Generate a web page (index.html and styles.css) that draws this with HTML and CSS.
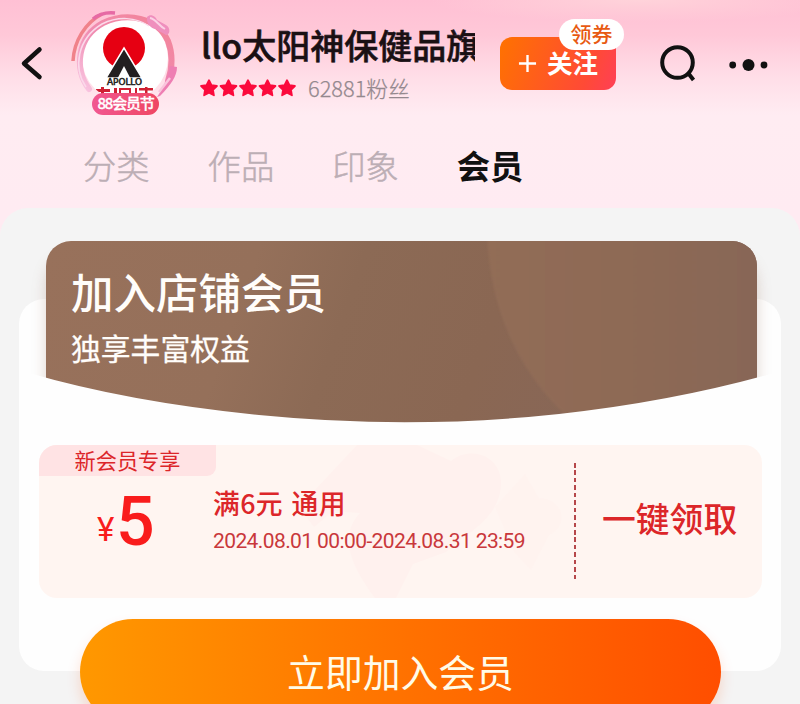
FILE: index.html
```html
<!DOCTYPE html>
<html lang="zh-CN">
<head>
<meta charset="utf-8">
<title>店铺会员</title>
<link rel="stylesheet" href="styles.css">
</head>
<body>
<div class="page">
  <header class="shop">
    <svg class="back" viewBox="0 0 24 36"><path d="M19.500 4.500 4 18.500l15.500 13.500"/></svg>
    <div class="avatar">
      <svg class="avatar-art" viewBox="0 0 112 110">
        <defs>
          <linearGradient id="ring" x1="0" y1="1" x2="1" y2="0">
            <stop offset="0" stop-color="#f9c6e2"/><stop offset=".45" stop-color="#f08db2"/><stop offset="1" stop-color="#f38295"/>
          </linearGradient>
          <clipPath id="disc"><circle cx="56" cy="50" r="43"/></clipPath>
        </defs>
        <circle cx="56" cy="50" r="43" fill="#fff"/>
        <g clip-path="url(#disc)">
          <circle cx="55" cy="40" r="21" fill="#e60012"/>
          <path d="M55 40 73 70H37z" fill="#231f20" stroke="#fff" stroke-width="1.500"/>
          <path d="M55 58l6.500 12.500h-13z" fill="#fff"/>
          <text x="38" y="77" textLength="35" lengthAdjust="spacingAndGlyphs" class="brand">APOLLO</text>
          <g fill="#cf2033"><path d="M27 81h14v3H27zM32 79h3v7h-3zM45 80h3v6h-3zM50 80h12v2H50zM50 80h2v6h-2zM60 80h2v6h-2zM66 80h2v6h-2zM70 80h14v2.500H70zM76 79h2.500v7H76z"/></g>
        </g>
        <path d="M20 81C5 61 8 29 34 15C58 4 88 9 99 33C104 46 104 58 99 73" fill="none" stroke="url(#ring)" stroke-width="6" stroke-linecap="round"/>
        <path d="M17 79C4 60 8 31 33 16C49 8 67 9 80 18" fill="none" stroke="#fbd9ea" stroke-width="1.500"/>
        <path d="M4 53C5 33 16 15 33 6" fill="none" stroke="#f0828a" stroke-width="3.500"/>
        <path d="M24 11C30 6 37 4 46 5" fill="none" stroke="#e66aa4" stroke-width="3.500"/>
        <path d="M78 9c4-4 9 0 10 3l9 5c5 3 4 10 0 10-4-3-7-3-10-6-5 0-10-6-9-12z" fill="#ef8fbd"/>
        <path d="M81 10c6 1 8 7 15 11" fill="none" stroke="#fbd1e5" stroke-width="2"/>
        <path d="M101 58l7 1c0 9-6 18-17 29l-3 1c5-7 9-15 13-31z" fill="#ee7fb3"/>
        <path d="M101 70 90 84" stroke="#fac5dc" stroke-width="2.500"/>
      </svg>
      <span class="fest">88会员节</span>
    </div>
    <div class="info">
      <div class="name">llo太阳神保健品旗</div>
      <div class="meta">
        <svg class="stars" viewBox="0 0 98 18">
          <defs><path id="s" d="M9 1.200l2.500 4.900 5.400.9-3.900 3.800.9 5.500L9 13.800l-4.900 2.500.9-5.500L1.100 7l5.400-.9z"/></defs>
          <use href="#s"/><use href="#s" x="19.500"/><use href="#s" x="39"/><use href="#s" x="58.500"/><use href="#s" x="78"/>
        </svg>
        <span class="fans">62881粉丝</span>
      </div>
    </div>
    <div class="follow">
      <svg class="plus" viewBox="0 0 20 20"><path d="M10 1v18M1 10h18"/></svg>
      <span class="label">关注</span>
      <span class="bubble">领券</span>
    </div>
    <svg class="search" viewBox="0 0 38 38"><circle cx="18.500" cy="17.500" r="15.300"/><path d="M29.500 28.500l5 6.500"/></svg>
    <svg class="more" viewBox="0 0 40 14"><circle cx="3.700" cy="7" r="3.400"/><circle cx="19.500" cy="7" r="6"/><circle cx="35" cy="7" r="3.400"/></svg>
  </header>

  <nav class="tabs">
    <span>分类</span><span>作品</span><span>印象</span><span class="on">会员</span>
  </nav>

  <main class="panel">
    <section class="member">
      <div class="hero">
        <svg class="hero-art" viewBox="0 0 762 204">
          <defs>
            <linearGradient id="brown" x1="0" y1="0" x2="1" y2=".1">
              <stop offset="0" stop-color="#98715b"/><stop offset=".3" stop-color="#95705a"/><stop offset=".45" stop-color="#8c6a55"/><stop offset=".66" stop-color="#8a6753"/><stop offset="1" stop-color="#86665a"/>
            </linearGradient>
            <linearGradient id="glow" x1="0" y1="0" x2="1" y2="0">
              <stop offset="0" stop-color="#926d57"/><stop offset=".45" stop-color="#8e6a55"/><stop offset="1" stop-color="#866557"/>
            </linearGradient>
            <clipPath id="card"><path d="M27 204V26A25 25 0 0 1 52 1H713a25 25 0 0 1 25 25V204z"/></clipPath>
            <filter id="blur" x="-10%" y="-20%" width="120%" height="140%"><feGaussianBlur stdDeviation="8"/></filter>
            <filter id="edge"><feGaussianBlur stdDeviation="1"/></filter>
          </defs>
          <rect x="29" y="18" width="707" height="160" rx="25" fill="#8c5f45" opacity=".34" filter="url(#blur)"/>
          <g clip-path="url(#card)">
            <rect x="27" y="1" width="711" height="203" fill="url(#brown)"/>
            <path d="M468 -10C470 70 500 135 556 184L780 200V-10z" fill="url(#glow)" filter="url(#edge)"/>
          </g>
          <path d="M0 130L10 133Q110 162 240 175Q391 190 540 174Q650 162 748 135L762 131V204H0z" fill="#fefefe"/>
        </svg>
        <div class="hero-text">
          <h1>加入店铺会员</h1>
          <p>独享丰富权益</p>
        </div>
      </div>

      <div class="coupon">
        <svg class="mark" viewBox="0 0 280 153"><g fill="#fff1ee"><path d="M0 62 58 0h60l34 16c20-16 50-5 50 22 0 35-36 51-55 69l-33 12-17 34H76c-22-30-38-60-15-85L34 66 15 82z"/><path d="M196 62 226 29l14 24c28 2 28 30 10 37l-18 35-16-17z" opacity=".6"/></g></svg>
        <span class="tag">新会员专享</span>
        <div class="row">
          <div class="price"><span class="yen">¥</span><span class="num">5</span></div>
          <div class="terms">
            <div class="rule">满6元 通用</div>
            <div class="date">2024.08.01 00:00-2024.08.31 23:59</div>
          </div>
          <div class="sep"></div>
          <div class="get">一键领取</div>
        </div>
      </div>
      <div class="join">立即加入会员</div>
    </section>
  </main>
</div>
</body>
</html>
```
FILE: styles.css
```css
* { box-sizing: border-box; }

body {
  margin: 0;
  font-family: "Noto Sans CJK SC", sans-serif;
  overflow: hidden;
}

.page {
  width: 800px;
  height: 704px;
  overflow: hidden;
  background:
    radial-gradient(ellipse 210px 22px at 640px 0, #ffd3da 0, #ffd3da00 100%),
    linear-gradient(#ffc0d4 0, #ffc8d8 35px, #ffdde7 75px, #ffecf2 115px, #ffebf2 210px);
}

.shop {
  display: flex;
  align-items: flex-start;
  height: 130px;
  padding-left: 20px;
}

.back {
  width: 24px;
  height: 36px;
  margin-top: 45px;
  fill: none;
  stroke: #111;
  stroke-width: 4.5;
  stroke-linecap: round;
  stroke-linejoin: round;
}

.avatar {
  position: relative;
  width: 112px;
  margin: 8px 0 0 25px;
}

.avatar-art {
  display: block;
  width: 112px;
  height: 110px;
}

.brand {
  font: 8.500px "DejaVu Sans", sans-serif;
  fill: #231f20;
  stroke: #231f20;
  stroke-width: .5;
}

.fest {
  position: absolute;
  left: 23px;
  top: 85px;
  width: 67px;
  height: 22px;
  border-radius: 11px;
  background: linear-gradient(90deg, #f15891, #ef4763);
  color: #fff;
  font-size: 15px;
  font-weight: 500;
  line-height: 20px;
  letter-spacing: -1.2px;
  text-align: center;
  -webkit-text-stroke: .3px #fff;
}

.info {
  width: 274px;
  margin: 20px 0 0 20px;
}

.name {
  height: 50px;
  overflow: hidden;
  white-space: nowrap;
  color: #1a1014;
  font-size: 34px;
  font-weight: 500;
  line-height: 49px;
  -webkit-text-stroke: .6px #1a1014;
}

.meta {
  display: flex;
  align-items: center;
  height: 34px;
  margin-left: -1px;
}

.stars {
  width: 98px;
  height: 18px;
  margin-top: 2px;
  fill: #fb0a3c;
  stroke: #fb0a3c;
  stroke-width: 1.8;
  stroke-linejoin: round;
}

.fans {
  margin-left: 10px;
  color: #94888e;
  font-size: 21.800px;
  font-weight: 300;
  -webkit-text-stroke: .25px #94888e;
}

.follow {
  position: relative;
  display: flex;
  align-items: center;
  width: 116px;
  height: 53px;
  margin: 37px 0 0 25px;
  padding-left: 18px;
  border-radius: 12px;
  background: linear-gradient(110deg, #ff7200, #ff4a36 75%, #ff3f56);
  color: #fff;
  font-size: 25.500px;
  font-weight: 700;
}

.label { margin-top: -4px; }

.plus {
  width: 19px;
  height: 19px;
  margin-right: 10px;
  stroke: #fff;
  stroke-width: 2.5;
}

.bubble {
  position: absolute;
  left: 59px;
  top: -18px;
  width: 65px;
  height: 31px;
  border-radius: 16px;
  background: #fff;
  color: #e85a12;
  font-size: 21px;
  font-weight: 500;
  line-height: 29px;
  text-align: center;
}

.search {
  width: 38px;
  height: 38px;
  margin: 45px 0 0 43px;
  fill: none;
  stroke: #111;
  stroke-width: 4;
}

.more {
  width: 40px;
  height: 14px;
  margin: 58px 0 0 32px;
  fill: #111;
}

.tabs {
  display: flex;
  gap: 58px;
  height: 78px;
  padding-left: 83px;
  color: #bcaeb5;
  font-size: 33.300px;
  font-weight: 300;
  line-height: 69px;
  -webkit-text-stroke: .5px #bcaeb5;
}

.tabs .on {
  color: #111;
  font-weight: 700;
  -webkit-text-stroke: 0;
}

.panel {
  height: 520px;
  padding: 91px 19px 0;
  border-radius: 28px 28px 0 0;
  background: #f4f4f4;
}

.member {
  height: 372px;
  border-radius: 25px;
  background: #fefefe;
}

.hero {
  display: grid;
  height: 204px;
  transform: translateY(-59px);
  margin-bottom: -58px;
}

.hero > * { grid-area: 1 / 1; }

.hero-art {
  width: 762px;
  height: 204px;
  overflow: visible;
}

.hero-text {
  z-index: 1;
  padding: 20px 0 0 52px;
  color: #fffdfa;
}

.hero h1 {
  margin: 0;
  font-size: 42.500px;
  font-weight: 500;
  line-height: 62px;
}

.hero p {
  margin: 3px 0 0;
  font-size: 29.800px;
  line-height: 44px;
  -webkit-text-stroke: .3px #fffdfa;
}

.coupon {
  position: relative;
  width: 723px;
  height: 153px;
  margin-left: 20px;
  overflow: hidden;
  border-radius: 18px;
  background: #fff5f1;
  color: #dc2629;
}

.mark {
  position: absolute;
  left: 260px;
  top: 0;
  width: 280px;
  height: 153px;
}

.tag {
  position: relative;
  display: block;
  width: 177px;
  height: 31px;
  border-radius: 0 0 9px;
  background: #ffe3e4;
  font-size: 21.200px;
  line-height: 29px;
  text-align: center;
}

.row {
  position: relative;
  display: flex;
  height: 122px;
}

.price {
  display: flex;
  align-items: baseline;
  width: 174px;
  padding-left: 58px;
  color: #f91c1c;
  font-family: Roboto, sans-serif;
  line-height: 92px;
}

.yen {
  width: 19px;
  font-size: 33px;
  letter-spacing: -1px;
  transform: translateY(-4px);
}

.num { font-size: 68px; font-weight: 500; }

.terms { width: 361px; padding-top: 7px; }

.rule {
  font-size: 26.800px;
  font-weight: 500;
  line-height: 40px;
  letter-spacing: .4px;
  word-spacing: 2px;
}

.date {
  margin-top: 4px;
  color: #c9383b;
  font-family: Roboto, sans-serif;
  font-size: 21px;
  line-height: 28px;
  letter-spacing: -.6px;
  white-space: nowrap;
}

.sep {
  width: 2px;
  height: 117px;
  margin-top: -13px;
  background: repeating-linear-gradient(#b6474a 0 4.500px, transparent 4.500px 7.450px);
}

.get {
  margin-left: 26px;
  font-size: 33.800px;
  font-weight: 500;
  line-height: 84px;
}

.join {
  width: 641px;
  height: 106px;
  margin: 21px 0 0 61px;
  border-radius: 53px;
  background: linear-gradient(90deg, #ff9800, #ff7200 50%, #ff4e00);
  box-shadow: 0 8px 14px #ff50002e;
  color: #fffbe8;
  font-size: 37.800px;
  line-height: 103px;
  text-align: center;
}
```
